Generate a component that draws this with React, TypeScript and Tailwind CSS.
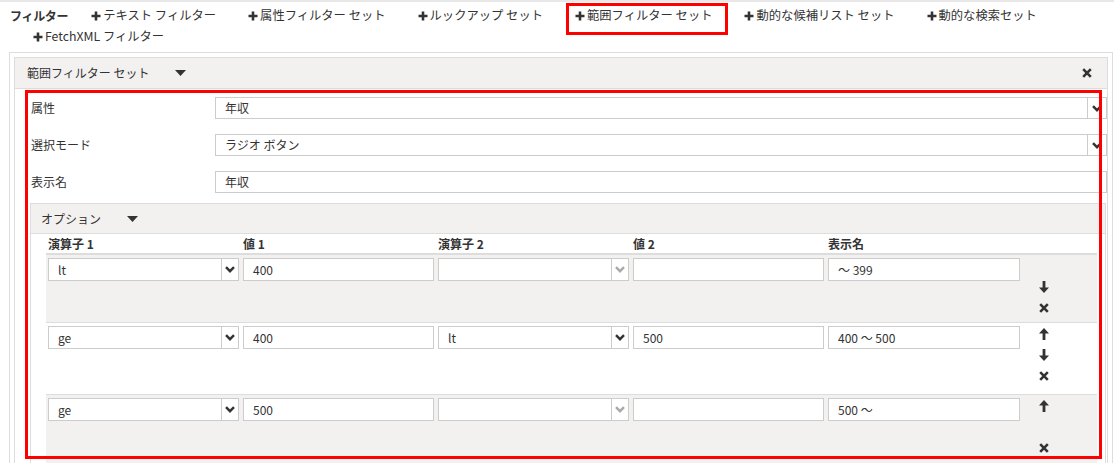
import React from "react";

const navItems = [
  { label: "テキスト フィルター" },
  { label: "属性フィルター セット" },
  { label: "ルックアップ セット" },
  { label: "範囲フィルター セット", marked: true },
  { label: "動的な候補リスト セット" },
  { label: "動的な検索セット" },
  { label: "FetchXML フィルター" },
];

const rows = [
  { op1: "lt", v1: "400", op2: "", v2: "", name: "～ 399", up: false, down: true },
  { op1: "ge", v1: "400", op2: "lt", v2: "500", name: "400 ～ 500", up: true, down: true },
  { op1: "ge", v1: "500", op2: "", v2: "", name: "500 ～", up: true, down: false },
];

function Plus() {
  return (
    <svg width="10" height="10" viewBox="0 0 10 10" className="shrink-0">
      <path d="M5 0.5v9M0.5 5h9" stroke="#333" strokeWidth="2.6" />
    </svg>
  );
}

function Cross() {
  return (
    <svg width="10" height="10" viewBox="0 0 10 10">
      <path d="M1.2 1.2l7.6 7.6M8.8 1.2l-7.6 7.6" stroke="#333" strokeWidth="2.6" />
    </svg>
  );
}

function Caret() {
  return (
    <svg width="11" height="6" viewBox="0 0 11 6">
      <path d="M0 0h11L5.5 6z" fill="#333" />
    </svg>
  );
}

function Chevron({ light }: { light?: boolean }) {
  return (
    <svg width="10" height="7" viewBox="0 0 10 7">
      <path d="M1 1.2l4 4 4-4" fill="none" stroke={light ? "#aaa" : "#333"} strokeWidth="2.4" />
    </svg>
  );
}

function Arrow({ dir }: { dir: "up" | "down" }) {
  return (
    <svg width="10" height="12" viewBox="0 0 10 12" className={dir === "up" ? "rotate-180" : ""}>
      <path d="M3.6 0h2.8v6.5H10L5 12 0 6.5h3.6z" fill="#333" />
    </svg>
  );
}

function Select({ value, h = "h-[23px]", w = "w-[17px]" }: { value: string; h?: string; w?: string }) {
  return (
    <div className={`flex ${h} border border-[#ccc] bg-white`}>
      <div className="flex flex-1 items-center pl-[9px]">{value}</div>
      <div className={`flex ${w} items-center justify-center border-l border-[#ccc]`}>
        <Chevron light={!value} />
      </div>
    </div>
  );
}

function Input({ value, h = "h-[23px]" }: { value: string; h?: string }) {
  return (
    <div className={`flex ${h} items-center border border-[#ccc] bg-white pl-[9px]`}>{value}</div>
  );
}

const grid = "grid grid-cols-[191px_191px_191px_191px_192px_1fr] gap-x-[4px] pl-[2px]";

export default function App() {
  return (
    <div className="min-h-screen bg-white font-['Noto_Sans_CJK_JP','Noto_Sans',sans-serif] text-[12px] text-[#333]">
      {/* filter toolbar */}
      <div className="flex flex-wrap border-t-2 border-[#e8e8e8] pb-[5px] pl-[10px] pt-[3px] leading-[21px]">
        <span className="font-bold tracking-[-0.3px]">フィルター</span>
        {navItems.map((item) => (
          <span
            key={item.label}
            className="relative ml-[23px] mr-[9px] inline-flex items-center gap-[2px] text-[12.3px]"
          >
            <Plus />
            {item.label}
            {item.marked && (
              <span className="pointer-events-none absolute -bottom-[9px] -left-[9px] -right-[16px] -top-[2px] border-[3px] border-[#f00]" />
            )}
          </span>
        ))}
      </div>

      <div className="ml-[9px] mr-[1px] border border-[#ddd] p-[4px]">
        <div className="border border-[#ddd]">
          {/* panel header */}
          <div className="flex h-[31px] items-center border-b border-[#ddd] bg-[#f2f1f0] pl-[12px] pr-[15px]">
            <span>範囲フィルター セット</span>
            <span className="ml-[26px] flex">
              <Caret />
            </span>
            <span className="ml-auto flex">
              <Cross />
            </span>
          </div>

          {/* panel body */}
          <div className="relative pb-[10px] pl-[15px] pt-[8px]">
            <div className="flex flex-col gap-[15px]">
              <div className="flex items-center">
                <div className="w-[185px] pl-[1px]">属性</div>
                <div className="flex-1">
                  <Select value="年収" h="h-[22px]" w="w-[19px]" />
                </div>
              </div>
              <div className="flex items-center">
                <div className="w-[185px] pl-[1px]">選択モード</div>
                <div className="flex-1">
                  <Select value="ラジオ ボタン" h="h-[22px]" w="w-[19px]" />
                </div>
              </div>
              <div className="flex items-center">
                <div className="w-[185px] pl-[1px]">表示名</div>
                <div className="flex-1">
                  <Input value="年収" h="h-[22px]" />
                </div>
              </div>
            </div>

            {/* options */}
            <div className="mr-[1px] mt-[10px] border border-[#ddd]">
              <div className="flex h-[30px] items-center border-b border-[#ddd] bg-[#f2f1f0] pl-[10px]">
                <span>オプション</span>
                <span className="ml-[26px] flex">
                  <Caret />
                </span>
              </div>
              <div className="pl-[15px] pr-[8px]">
                <div className={`${grid} h-[21px] items-center border-b-2 border-[#ddd] font-bold`}>
                  <div>演算子 1</div>
                  <div>値 1</div>
                  <div>演算子 2</div>
                  <div>値 2</div>
                  <div>表示名</div>
                  <div />
                </div>
                {rows.map((r, i) => (
                  <div
                    key={i}
                    className={`${grid} h-[67px] pb-[4px] ${i > 0 ? "box-content border-t border-[#ddd]" : ""} ${
                      i % 2 === 0 ? "bg-[#f2f1f0]" : "bg-white"
                    }`}
                  >
                    <div className="pt-[3px]">
                      <Select value={r.op1} />
                    </div>
                    <div className="pt-[3px]">
                      <Input value={r.v1} />
                    </div>
                    <div className="pt-[3px]">
                      <Select value={r.op2} />
                    </div>
                    <div className="pt-[3px]">
                      <Input value={r.v2} />
                    </div>
                    <div className="pt-[3px]">
                      <Input value={r.name} />
                    </div>
                    <div className="flex w-[40px] flex-col items-center">
                      <div className="flex h-[21px] items-center">{r.up && <Arrow dir="up" />}</div>
                      <div className="flex h-[21px] items-center">{r.down && <Arrow dir="down" />}</div>
                      <div className="flex h-[21px] items-center">
                        <Cross />
                      </div>
                    </div>
                  </div>
                ))}
              </div>
            </div>

            {/* annotation box */}
            <div className="pointer-events-none absolute left-[10px] top-[1px] h-[369px] w-[1077px] border-[3px] border-[#f00]" />
          </div>
        </div>
      </div>
    </div>
  );
}
